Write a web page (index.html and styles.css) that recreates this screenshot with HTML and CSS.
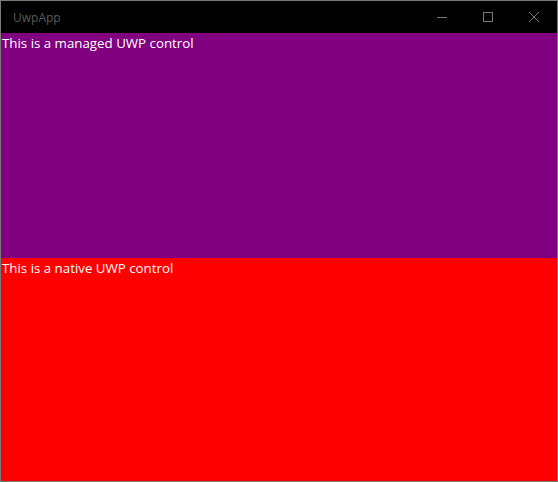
FILE: index.html
```html
<!DOCTYPE html>
<html>
<head>
<meta charset="utf-8">
<link rel="stylesheet" href="styles.css">
</head>
<body>
<div class="window">
  <div class="titlebar">
    <span class="title">UwpApp</span>
    <div class="controls">
      <div class="btn"><svg width="10" height="10" viewBox="0 0 10 10"><path d="M0 5.5H10" stroke="#7a7a7a" stroke-width="1"/></svg></div>
      <div class="btn"><svg width="10" height="10" viewBox="0 0 10 10"><rect x="0.5" y="0.5" width="9" height="9" fill="none" stroke="#7a7a7a" stroke-width="1"/></svg></div>
      <div class="btn"><svg width="10" height="10" viewBox="0 0 10 10"><path d="M0 0L10 10M10 0L0 10" stroke="#7a7a7a" stroke-width="1"/></svg></div>
    </div>
  </div>
  <div class="pane managed">This is a managed UWP control</div>
  <div class="pane native">This is a native UWP control</div>
</div>
</body>
</html>
```
FILE: styles.css
```css
html, body {
  margin: 0;
  padding: 0;
  background: #7a7a7a;
}
.window {
  width: 556px;
  height: 480px;
  border: 1px solid #7a7a7a;
  display: flex;
  flex-direction: column;
  background: #000;
}
.titlebar {
  height: 32px;
  background: #000;
  display: flex;
  align-items: center;
  justify-content: space-between;
}
.title {
  font-family: "Open Sans", "Noto Sans", sans-serif;
  font-size: 12px;
  color: #5c5c5c;
  padding-left: 12px;
}
.controls {
  display: flex;
  height: 32px;
}
.btn {
  width: 46px;
  height: 32px;
  display: flex;
  align-items: center;
  justify-content: center;
}
.pane {
  font-family: "Open Sans", "Noto Sans", sans-serif;
  font-size: 13.3px;
  color: #fff;
  line-height: 20px;
  padding-left: 1px;
}
.managed {
  height: 225px;
  background: #800080;
}
.native {
  flex: 1;
  background: #ff0000;
}
```
